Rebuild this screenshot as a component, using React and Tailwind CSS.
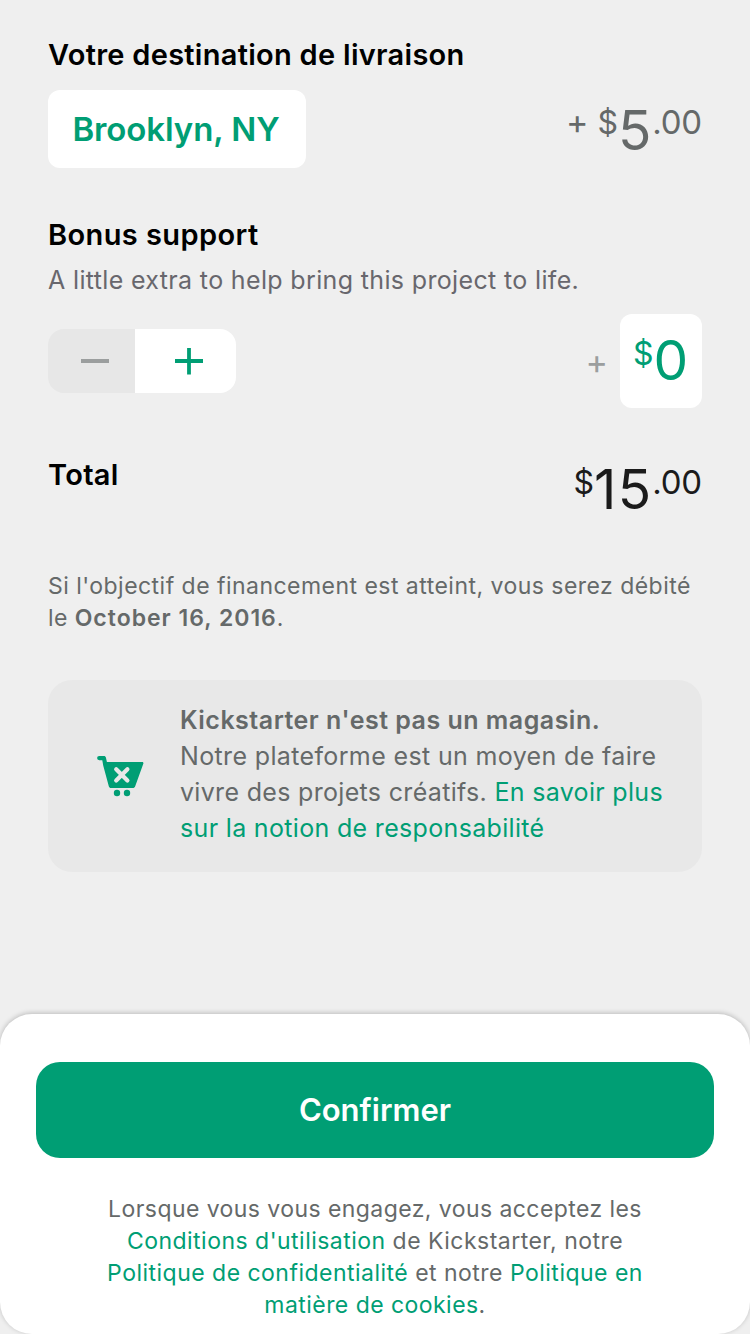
function Heading({ children, className = "" }) {
  return (
    <h2 className={`text-[29px] leading-[38px] font-semibold whitespace-nowrap text-black ${className}`}>
      {children}
    </h2>
  );
}

function CartIcon() {
  return (
    <svg width="48" height="42" viewBox="0 0 48 42" fill="none">
      <path
        d="M2.200 0H7c1 0 1.700.6 1.900 1.600L9.900 6h35.200c1.100 0 1.600.8 1.200 1.800l-8.100 22.400c-.4 1.200-1.200 1.800-2.400 1.800H14.200c-1.300 0-2.100-.6-2.400-1.800L6.200 9.500 5.300 4.200H2.200a2.100 2.100 0 0 1 0-4.200Z"
        fill="#009e74"
      />
      <path d="m19.200 13.200 11.200 11.200m0-11.200L19.200 24.400" stroke="#e8e8e8" strokeWidth="4.200" strokeLinecap="round" />
      <circle cx="20" cy="37" r="3.200" fill="#009e74" />
      <circle cx="30" cy="37" r="3.200" fill="#009e74" />
    </svg>
  );
}

export default function App() {
  return (
    <div className="flex h-[1334px] w-[750px] flex-col overflow-hidden bg-[#efefef] pt-9 font-['Inter',sans-serif] text-[#656969]">
      <main className="flex flex-1 flex-col px-12">
        <Heading className="tracking-[0.28px]">Votre destination de livraison</Heading>
        <div className="mt-4 flex h-[78px] items-start justify-between">
          <button className="h-[78px] w-[258px] rounded-xl bg-white pt-0.5 pr-0.5 text-[33px] font-semibold tracking-[-0.1px] whitespace-nowrap text-[#009e74]">
            Brooklyn, NY
          </button>
          <div className="flex items-start pt-[14px]">
            <span className="mr-[9px] text-[34px] leading-9">+</span>
            <span className="text-[32px] leading-[38px]">$</span>
            <span className="text-[55px] leading-[52px] tracking-[0.8px]">5</span>
            <span className="text-[33px] leading-[37px] tracking-[-0.2px]">.00</span>
          </div>
        </div>

        <Heading className="mt-12 tracking-[0.4px]">Bonus support</Heading>
        <p className="mt-2.5 text-[25px] leading-8 tracking-[0.35px] whitespace-nowrap text-[#68676d]">
          A little extra to help bring this project to life.
        </p>
        <div className="mt-[18px] flex h-[94px] items-center justify-between">
          <div className="flex h-16 w-[188px] overflow-hidden rounded-2xl">
            <button className="flex w-[87px] items-center justify-end bg-[#e7e7e7] pr-[26px]">
              <svg width="28" height="28" viewBox="0 0 28 28">
                <path d="M0 14h28" stroke="#9b9e9e" strokeWidth="4" />
              </svg>
            </button>
            <button className="flex flex-1 items-center bg-white pl-10">
              <svg width="28" height="28" viewBox="0 0 28 28">
                <path d="M0 14h28M14 1v26.500" stroke="#009e74" strokeWidth="3.800" />
              </svg>
            </button>
          </div>
          <div className="flex items-center">
            <span className="mr-3 pt-0.5 text-[34px] leading-9 text-[#9b9e9e]">+</span>
            <div className="flex h-[94px] w-[82px] items-start justify-center rounded-xl bg-white pt-[21px] pr-px text-[#009e74]">
              <span className="text-[32px] leading-[38px]">$</span>
              <span className="text-[55px] leading-[51px]">0</span>
            </div>
          </div>
        </div>

        <div className="mt-12 flex h-[60px] items-start justify-between">
          <Heading className="tracking-[0.3px]">Total</Heading>
          <div className="flex items-start pt-2 text-[#1b1b1b]">
            <span className="text-[32px] leading-[38px]">$</span>
            <span className="text-[55px] leading-[50px] tracking-[1.2px]">15</span>
            <span className="text-[33px] leading-9 tracking-[-0.2px]">.00</span>
          </div>
        </div>

        <p className="mt-[54px] flex flex-col items-start text-[23px] leading-8 whitespace-nowrap">
          <span className="tracking-[0.47px]">Si l'objectif de financement est atteint, vous serez débité</span>
          <span className="tracking-[0.4px]">le <b className="font-semibold tracking-[1px]">October 16, 2016</b>.</span>
        </p>

        <section className="mt-[46px] flex h-48 items-center rounded-3xl bg-[#e8e8e8]">
          <div className="w-[132px] pt-0.5 pl-[49px]">
            <CartIcon />
          </div>
          <p className="flex flex-col items-start pb-1 text-[25px] leading-9 whitespace-nowrap">
            <b className="font-semibold tracking-[0.49px]">Kickstarter n'est pas un magasin.</b>
            <span className="tracking-[0.36px]">Notre plateforme est un moyen de faire</span>
            <span className="tracking-[0.32px]">vivre des projets créatifs. <a className="text-[#009e74]">En savoir plus</a></span>
            <a className="tracking-[0.33px] text-[#009e74]">sur la notion de responsabilité</a>
          </p>
        </section>
      </main>

      <footer className="flex h-80 flex-col rounded-[32px] bg-white px-9 pt-12 shadow-[0_-1px_5px_rgba(0,0,0,0.22)]">
        <button className="h-24 rounded-3xl bg-[#009e74] text-[31px] font-semibold text-white">
          Confirmer
        </button>
        <p className="mt-[35px] flex flex-col items-center text-[23px] leading-8 whitespace-nowrap">
          <span className="tracking-[0.43px]">Lorsque vous vous engagez, vous acceptez les</span>
          <span className="tracking-[0.48px]"><a className="text-[#009e74]">Conditions d'utilisation</a> de Kickstarter, notre</span>
          <span className="tracking-[0.48px]"><a className="text-[#009e74]">Politique de confidentialité</a> et notre <a className="text-[#009e74]">Politique en</a></span>
          <span className="tracking-[0.45px]"><a className="text-[#009e74]">matière de cookies</a>.</span>
        </p>
      </footer>
    </div>
  );
}
